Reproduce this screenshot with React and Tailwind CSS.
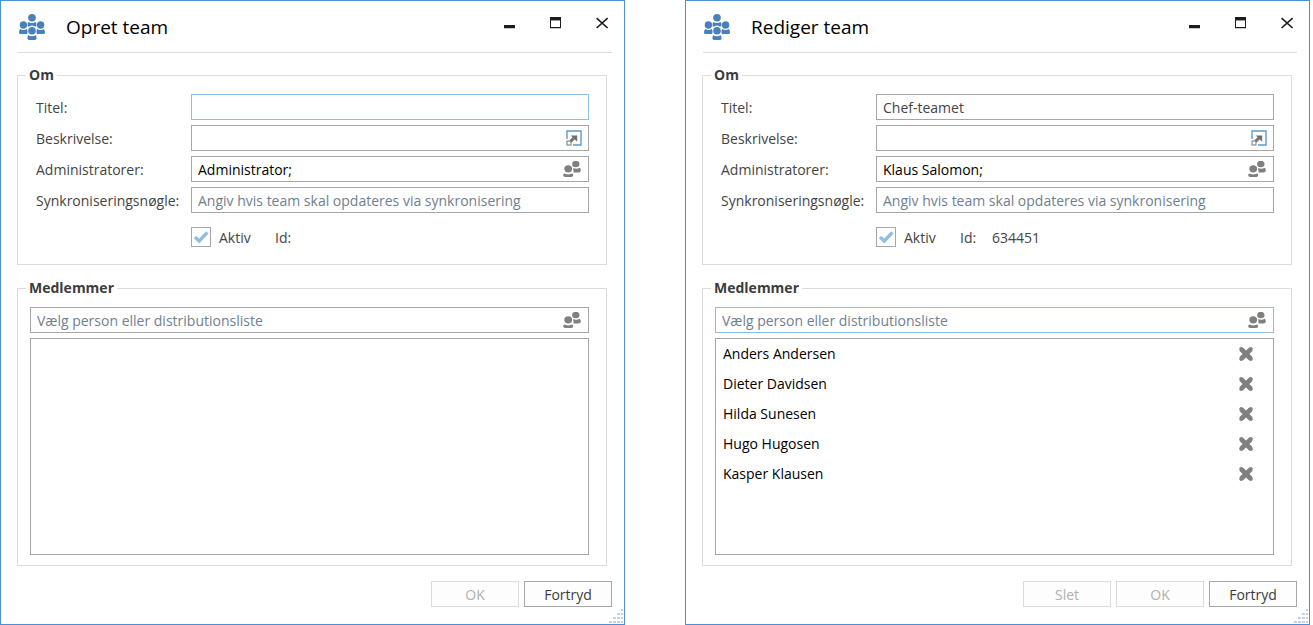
import React, { useId, useState } from 'react'

const labelClass = 'pt-[2px] text-[#444]'
const fieldBox = 'flex items-center h-[26px] border bg-white focus-within:border-[#8fbfe0]'
const inputClass = 'flex-1 min-w-0 h-full px-[6px] bg-transparent outline-none placeholder:text-[#708090] placeholder:opacity-100'

const TeamIcon = () => (
    <svg className="w-[26px] h-[26px]" viewBox="0 0 26 26" fill="#4a80ba" aria-hidden="true">
        <circle cx="13" cy="3.8" r="3.8" />
        <path d="M9.4 8 Q13 9.8 16.6 8 L17.4 9.6 V12.4 H15.6 Q13 10.6 10.4 12.4 H8.6 V9.6 Z" />
        <circle cx="4.4" cy="11" r="3.7" />
        <circle cx="21.6" cy="11" r="3.7" />
        <path d="M1.2 15 Q4.4 16.8 7.8 15 L8.6 17 L8.2 20 H1.4 Q0 20 0 18.4 Q0 16.4 1.2 15 Z" />
        <path d="M24.8 15 Q21.6 16.8 18.2 15 L17.4 17 L17.8 20 H24.6 Q26 20 26 18.4 Q26 16.4 24.8 15 Z" />
        <circle cx="13" cy="16.8" r="3.8" />
        <path d="M9.4 21.2 Q13 23.2 16.6 21.2 Q17.8 22.6 17.6 24.6 Q17.4 26 16 26 H10 Q8.6 26 8.4 24.6 Q8.2 22.6 9.4 21.2 Z" />
    </svg>
)

const PeopleIcon = () => (
    <svg className="w-[19px] h-4" viewBox="0 0 19 16" fill="#808080" aria-hidden="true">
        <ellipse cx="12.8" cy="3" rx="3.7" ry="3.2" />
        <path d="M10.2 7 Q13.4 8.4 16.8 6.8 Q18 8 17.8 9.8 Q17.4 11.4 15.6 11.4 H10.6 Z" />
        <ellipse cx="5.2" cy="7.8" rx="3.9" ry="3.6" />
        <path d="M1 12.6 Q5.2 14.2 9.4 12.6 Q10.4 13.4 10.2 14.6 Q10 16 8.4 16 H2 Q0.4 16 0.2 14.6 Q0 13.4 1 12.6 Z" />
    </svg>
)

const ExpandIcon = () => (
    <svg className="w-4 h-4" viewBox="0 0 16 16" fill="none" aria-hidden="true">
        <path d="M1 9 V1 H15 V15 H7" stroke="#5b9bd0" strokeWidth="1.4" />
        <rect x="1" y="11" width="4" height="4" stroke="#777" />
        <path d="M4.6 11.4 L9 7" stroke="#777" strokeWidth="3" />
        <path d="M4.8 5.4 H11.2 V11.8 Z" fill="#707070" />
    </svg>
)

const RemoveIcon = () => (
    <svg className="w-4 h-4" viewBox="0 0 16 16" aria-hidden="true">
        <path d="M3 3 L13 13 M13 3 L3 13" stroke="#808080" strokeWidth="4.6" />
        <path d="M3 3 L13 13 M13 3 L3 13" stroke="#808080" strokeWidth="3.6" strokeLinecap="round" />
    </svg>
)

const WindowButtons = () => (
    <div className="flex gap-[2px] self-start">
        <button aria-label="Minimer" className="w-11 h-11 flex items-center justify-center">
            <svg className="w-[14px] h-[14px]" viewBox="0 0 14 14">
                <rect x="1" y="9" width="11" height="3" fill="#1c1c1c" />
                <rect x="1" y="12" width="11" height="1" fill="#c8c8c8" />
            </svg>
        </button>
        <button aria-label="Maksimer" className="w-11 h-11 flex items-center justify-center">
            <svg className="w-[14px] h-[14px]" viewBox="0 0 14 14">
                <rect x="1.5" y="1.5" width="10" height="10" fill="none" stroke="#1c1c1c" />
                <rect x="1" y="1" width="11" height="3" fill="#1c1c1c" />
                <rect x="2" y="4" width="9" height="1" fill="#999" />
                <rect x="1" y="12" width="11" height="1" fill="#c8c8c8" />
            </svg>
        </button>
        <button aria-label="Luk" className="w-11 h-11 flex items-center justify-center">
            <svg className="w-[14px] h-[14px]" viewBox="0 0 14 14"><path d="M1.6 2.2 L12.6 12 M12.6 2.2 L1.6 12" stroke="#1c1c1c" strokeWidth="1.6" /></svg>
        </button>
    </div>
)

const Group = ({ title, className, children }) => (
    <fieldset className="border border-[#dcdcdc]">
        <legend className="ml-2 px-[3px] leading-5 font-bold text-[#3c3c3c]">{title}</legend>
        <div className={className}>{children}</div>
    </fieldset>
)

const Field = ({ id, label, value, onChange, placeholder, dark, active, icon, iconLabel }) => (
    <div className="flex items-center">
        <label htmlFor={id} className={`w-[155px] shrink-0 whitespace-nowrap ${labelClass}`}>{label}</label>
        <div className={`flex-1 min-w-0 ${fieldBox} ${active ? 'border-[#8fbfe0]' : 'border-[#a6a6ab]'}`}>
            <input
                id={id}
                type="text"
                className={`${inputClass} ${dark ? 'text-black' : 'text-[#444]'}`}
                value={value}
                placeholder={placeholder}
                onChange={onChange}
            />
            {icon && <button aria-label={iconLabel} className="mr-[6px]">{icon}</button>}
        </div>
    </div>
)

const buttonClass = 'w-[88px] h-[26px] pt-px border bg-[#fdfdfd] text-center border-[#a6a6ab] text-[#3c3c3c] disabled:border-[#dcdcdc] disabled:text-[#b0b0b0]'

const TeamDialog = ({ heading, team, teamId, initialMembers, activeField, canDelete }) => {
    const uid = useId()
    const [data, setData] = useState(team)
    const [enabled, setEnabled] = useState(true)
    const [search, setSearch] = useState('')
    const [members, setMembers] = useState(initialMembers)

    const update = (name) => (e) => setData(prev => ({ ...prev, [name]: e.target.value }))

    return (
        <section className="flex-1 min-w-0 border border-[#4a90d9] bg-white relative pb-[17px]">
            <header className="flex items-center h-[51px] pl-[18px]">
                <TeamIcon />
                <h1 className="flex-1 ml-[21px] text-[19px] leading-6 text-black">{heading}</h1>
                <WindowButtons />
            </header>
            <hr className="ml-[17px] mr-3 border-[#dcdcdc]" />

            <div className="ml-4 mr-[17px] mt-3 flex flex-col gap-[13px]">
                <Group title="Om" className="pt-[9px] pb-[17px] pl-[18px] pr-[17px]">
                    <div className="flex flex-col gap-[5px]">
                        <Field id={uid + 'title'} label="Titel:" value={data.title} onChange={update('title')} active={activeField === 'title'} />
                        <Field id={uid + 'desc'} label="Beskrivelse:" value={data.description} onChange={update('description')} icon={<ExpandIcon />} iconLabel="Udvid" />
                        <Field id={uid + 'admins'} label="Administratorer:" value={data.admins} onChange={update('admins')} dark icon={<PeopleIcon />} iconLabel="Vælg administratorer" />
                        <Field id={uid + 'sync'} label="Synkroniseringsnøgle:" value={data.syncKey} onChange={update('syncKey')} placeholder="Angiv hvis team skal opdateres via synkronisering" />
                    </div>
                    <div className="flex items-center mt-[14px] ml-[155px] h-5 text-[#444]">
                        <label className="flex items-center w-[84px] gap-2">
                            <span className="relative w-5 h-5">
                                <input
                                    type="checkbox"
                                    className="peer appearance-none block w-5 h-5 border border-[#a6a6ab] bg-white"
                                    checked={enabled}
                                    onChange={(e) => setEnabled(e.target.checked)}
                                />
                                <svg className="absolute inset-0 w-5 h-5 pointer-events-none hidden peer-checked:block" viewBox="0 0 20 20" fill="none" aria-hidden="true">
                                    <path d="M4 10 L8.2 14 L16.4 5.4" stroke="#8fbfe0" strokeWidth="3.4" />
                                </svg>
                            </span>
                            <span className={labelClass}>Aktiv</span>
                        </label>
                        <span className={`w-8 ${labelClass}`}>Id:</span>
                        <span className={labelClass}>{teamId}</span>
                    </div>
                </Group>

                <Group title="Medlemmer" className="pt-[9px] pb-[10px] pl-3 pr-[17px]">
                    <div className={`${fieldBox} ${activeField === 'search' ? 'border-[#8fbfe0]' : 'border-[#a6a6ab]'}`}>
                        <input
                            type="text"
                            aria-label="Medlemmer"
                            className={inputClass}
                            value={search}
                            placeholder="Vælg person eller distributionsliste"
                            onChange={(e) => setSearch(e.target.value)}
                        />
                        <button aria-label="Vælg personer" className="mr-[6px]"><PeopleIcon /></button>
                    </div>
                    <ul className="mt-[5px] min-h-[217px] border border-[#a6a6ab] text-black">
                        {members.map(name => (
                            <li key={name} className="flex items-center justify-between h-[30px] pl-[7px] pr-[19px]">
                                {name}
                                <button aria-label={'Fjern ' + name} onClick={() => setMembers(members.filter(m => m !== name))}>
                                    <RemoveIcon />
                                </button>
                            </li>
                        ))}
                    </ul>
                </Group>
            </div>

            <footer className="flex justify-end gap-[5px] mt-[15px] mr-3">
                {canDelete && <button disabled className={buttonClass}>Slet</button>}
                <button disabled className={buttonClass}>OK</button>
                <button className={buttonClass}>Fortryd</button>
            </footer>

            <svg className="absolute right-px bottom-px w-[14px] h-[14px]" viewBox="0 0 14 14" fill="#c9d0df" aria-hidden="true">
                {[[12, 0], [8, 4], [12, 4], [4, 8], [8, 8], [12, 8], [0, 12], [4, 12], [8, 12], [12, 12]].map(([x, y]) => (
                    <rect key={x + '-' + y} x={x} y={y} width="3" height="2" />
                ))}
            </svg>
        </section>
    )
}

const App = () => {
    return (
        <main className="flex items-start gap-[60px] pr-[3px] bg-white font-['Open_Sans','Noto_Sans',sans-serif] text-[14px] leading-5">
            <TeamDialog
                heading="Opret team"
                team={{ title: '', description: '', admins: 'Administrator;', syncKey: '' }}
                initialMembers={[]}
                activeField="title"
            />
            <TeamDialog
                heading="Rediger team"
                team={{ title: 'Chef-teamet', description: '', admins: 'Klaus Salomon;', syncKey: '' }}
                teamId="634451"
                initialMembers={['Anders Andersen', 'Dieter Davidsen', 'Hilda Sunesen', 'Hugo Hugosen', 'Kasper Klausen']}
                activeField="search"
                canDelete
            />
        </main>
    )
}

export default App
